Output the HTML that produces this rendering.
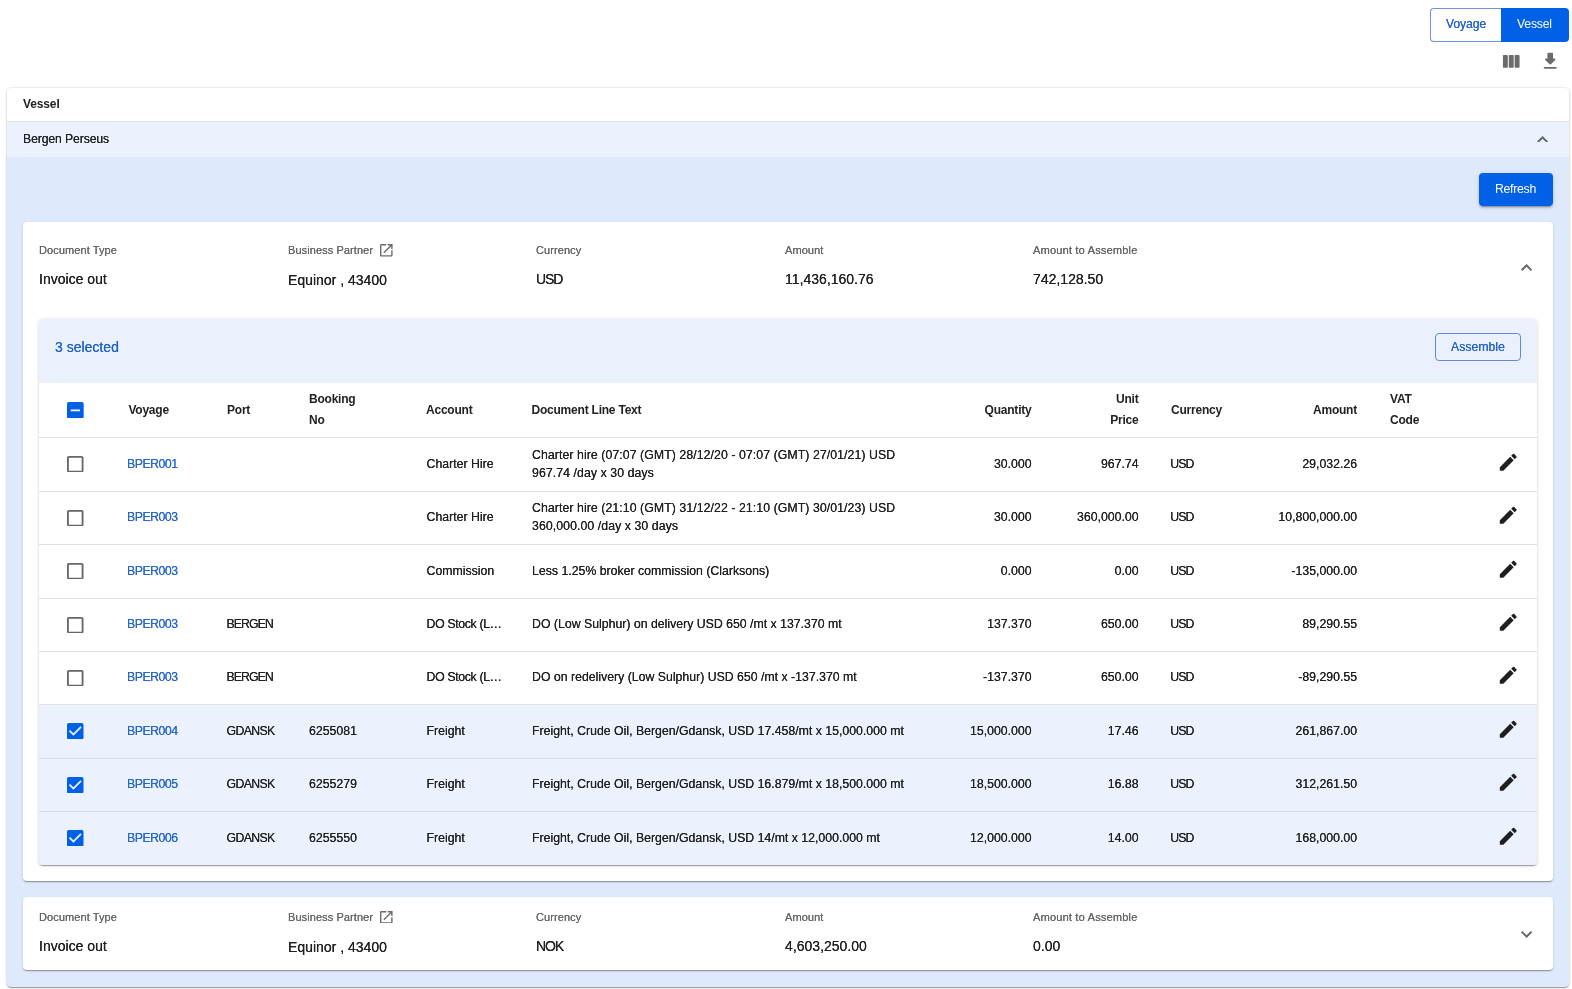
<!DOCTYPE html>
<html><head><meta charset="utf-8"><style>
*{box-sizing:border-box;margin:0;padding:0}
html,body{width:1572px;height:989px;overflow:hidden;background:#fff;font-family:"Liberation Sans",sans-serif;color:#212121}
#root{position:absolute;left:0;top:0;width:1572px;height:989px;will-change:transform;text-shadow:0.1px 0 0 currentColor}
.tg{position:absolute;left:1430px;top:8px;width:139px;height:34px}
.tg .b1{position:absolute;left:0;top:0;width:71px;height:34px;border:1px solid #6f95d6;border-right:none;border-radius:4px 0 0 4px}
.tg .b2{position:absolute;left:71px;top:0;width:68px;height:34px;background:#0061e6;border-radius:0 4px 4px 0}
.tg span{position:absolute;top:10px;font-size:12.2px;line-height:14px;white-space:nowrap}
.ico{position:absolute}
.card{position:absolute;left:7px;top:88px;width:1562px;height:899px;border-radius:4px;background:#dee9fb;box-shadow:0 2px 1px -1px rgba(0,0,0,.2),0 1px 1px 0 rgba(0,0,0,.14),0 1px 3px 0 rgba(0,0,0,.12),0 0 0 0.6px rgba(0,0,0,.07),0 0 5px rgba(0,0,0,.06);overflow:hidden}
.vh{position:absolute;left:0;top:0;width:100%;height:34px;background:#fff;border-bottom:1px solid #e0e0e0}
.vh span{position:absolute;left:16px;top:9.3px;font-size:12px;line-height:14px;color:#222;font-weight:bold;letter-spacing:-0.13px;text-shadow:none}
.bp{position:absolute;left:0;top:34px;width:100%;height:35px;background:#ebf2fd}
.bp span{position:absolute;left:16px;top:10px;font-size:12.2px;line-height:14px;color:#222;letter-spacing:-0.1px}
.chv{position:absolute;width:11.2px;height:6.9px}
.btn{position:absolute;left:1472px;top:85px;width:74px;height:33px;border-radius:4px;background:#0061e6;box-shadow:0 3px 1px -2px rgba(0,0,0,.2),0 2px 2px 0 rgba(0,0,0,.14),0 1px 5px 0 rgba(0,0,0,.12)}
.btn span{position:absolute;left:16px;top:9px;font-size:12.3px;line-height:14px;color:#fff;letter-spacing:-0.3px;text-shadow:none}
.doc{position:absolute;background:#fff;border-radius:4px;box-shadow:0 2px 1px -1px rgba(0,0,0,.2),0 1px 1px 0 rgba(0,0,0,.14),0 1px 3px 0 rgba(0,0,0,.12)}
.lbl{position:absolute;font-size:11px;color:#666;white-space:nowrap;line-height:13px}
.op{position:absolute;left:92px;top:0px;width:12.6px;height:12.6px}
.val{position:absolute;font-size:14px;color:#212121;white-space:nowrap;line-height:16px}
.tbl{position:absolute;left:16px;top:97px;width:1498px;height:546px;background:#fff;border-radius:4px;overflow:hidden;box-shadow:0 2px 1px -1px rgba(0,0,0,.2),0 1px 1px 0 rgba(0,0,0,.14),0 1px 3px 0 rgba(0,0,0,.12),0 0 5px rgba(0,0,0,.06)}
.tb{position:absolute;left:0;top:0;width:100%;height:64px;background:#eaf1fc}
.tb .sc{position:absolute;left:16px;top:20px;font-size:14px;line-height:16px;color:#1f63c6}
.asm{position:absolute;left:1396px;top:14px;width:86px;height:28px;border:1px solid #5f8cd6;border-radius:4px}
.asm span{position:absolute;left:15px;top:6px;font-size:12.2px;line-height:14px;color:#2564c8;letter-spacing:0.05px}
.hdr{position:absolute;left:0;top:64px;width:100%;height:55px;border-bottom:1px solid #e0e0e0;background:#fff}
.row{position:absolute;left:0;width:100%;border-bottom:1px solid #e0e0e0;background:#fff}
.row.last{border-bottom:none}
.row.sel{background:#ebf2fd;border-bottom-color:#d8dee9}
.c{position:absolute;top:0;bottom:0;display:flex;align-items:center;font-size:12.3px;white-space:nowrap;color:#212121;padding-bottom:2px}
.hdr .c,.c.two{padding-bottom:0}
.hdr .c{font-size:12px;font-weight:bold;letter-spacing:-0.22px;text-shadow:none;color:#222}
.c.two{flex-direction:column;align-items:flex-start;justify-content:center;line-height:17.9px;letter-spacing:0.07px}
.ck{position:absolute;left:28px;top:17.5px}
.cb{display:block;width:16.5px;height:16.5px}
.cbh{position:absolute;left:28px;top:18.8px;width:16.7px;height:16.7px}
.vy{left:88px;color:#2868c9}
.hdr .vy{left:89.4px}
.hdr .vy{color:#212121}
.pt{left:187.5px}
.hdr .pt{left:188px}
.bk{left:270px}
.hdr .bk{left:270px}
.ac{left:387.5px}
.hdr .ac{left:387px}
.dt{left:493px}
.hdr .dt{left:492.5px}
.qt{right:505.5px}
.upr{right:398.5px}
.cu{left:1131.2px}
.hdr .cu{left:1132px}
.am{right:180px}
.vat{left:1351px}
.edc{position:absolute;left:1457.8px;top:calc(50% - 13.8px)}
.ed{display:block;width:22.5px;height:22.5px}
.hdr .two2{flex-direction:column;justify-content:center;line-height:21px}
</style></head><body><div id="root">
<div class="tg"><div class="b1"><span style="left:15px;top:8.3px;color:#2564c8;letter-spacing:-0.12px">Voyage</span></div><div class="b2"><span style="left:16px;top:9.3px;color:#fff;letter-spacing:-0.17px;text-shadow:none">Vessel</span></div></div>
<svg class="ico" style="left:1499.3px;top:50.3px;width:23.5px;height:23.5px" viewBox="0 0 24 24"><path fill="#6b6b6b" d="M11 18h3c.55 0 1-.45 1-1V6c0-.55-.45-1-1-1h-3c-.55 0-1 .45-1 1v11c0 .55.45 1 1 1zm-6 0h3c.55 0 1-.45 1-1V6c0-.55-.45-1-1-1H5c-.55 0-1 .45-1 1v11c0 .55.45 1 1 1zM16 6v11c0 .55.45 1 1 1h3c.55 0 1-.45 1-1V6c0-.55-.45-1-1-1h-3c-.55 0-1 .45-1 1z"/></svg>
<svg class="ico" style="left:1539px;top:49.6px;width:22.5px;height:22.5px" viewBox="0 0 24 24"><path fill="#6b6b6b" d="M16.59 9H15V4c0-.55-.45-1-1-1h-4c-.55 0-1 .45-1 1v5H7.41c-.89 0-1.34 1.08-.71 1.71l4.59 4.59c.39.39 1.02.39 1.41 0l4.59-4.59c.63-.63.19-1.710-.7-1.71zM5 19c0 .55.45 1 1 1h12c.55 0 1-.45 1-1s-.45-1-1-1H6c-.55 0-1 .45-1 1z"/></svg>
<div class="card">
 <div class="vh"><span>Vessel</span></div>
 <div class="bp"><span>Bergen Perseus</span><div style="position:absolute;left:1529.7px;top:13.5px"><svg class="chv" viewBox="6 8 12 7.41"><path fill="#5f6368" d="M12 8l-6 6 1.41 1.41L12 10.83l4.59 4.58L18 14z"/></svg></div></div>
 <div class="btn"><span>Refresh</span></div>
 <div class="doc" style="left:16px;top:134px;width:1530px;height:659px">
  <div class="lbl" style="left:16px;top:22px;letter-spacing:0.08px">Document Type</div><div class="val" style="left:16px;top:49px">Invoice out</div><div class="lbl" style="left:265px;top:22px;letter-spacing:0.08px">Business Partner<svg class="op" viewBox="3 3 18 18"><path fill="#6b6b6b" d="M19 19H5V5h7V3H5c-1.11 0-2 .9-2 2v14c0 1.1.89 2 2 2h14c1.1 0 2-.9 2-2v-7h-2v7zM14 3v2h3.59l-9.83 9.83 1.41 1.41L19 6.41V10h2V3h-7z"/></svg></div><div class="val" style="left:265px;top:50px">Equinor , 43400</div><div class="lbl" style="left:513px;top:22px;letter-spacing:0.08px">Currency</div><div class="val" style="left:513px;top:49px"><span style="letter-spacing:-1.1px">USD</span></div><div class="lbl" style="left:762px;top:22px;letter-spacing:0.08px">Amount</div><div class="val" style="left:762px;top:49px">11,436,160.76</div><div class="lbl" style="left:1010px;top:22px;letter-spacing:0.2px">Amount to Assemble</div><div class="val" style="left:1010px;top:49px">742,128.50</div>
  <div style="position:absolute;left:1498px;top:41.8px"><svg class="chv" viewBox="6 8 12 7.41"><path fill="#5f6368" d="M12 8l-6 6 1.41 1.41L12 10.83l4.59 4.58L18 14z"/></svg></div>
  <div class="tbl">
   <div class="tb"><span class="sc">3 selected</span><div class="asm"><span>Assemble</span></div></div>
   <div class="hdr">
    <svg class="cbh" viewBox="3 3 18 18"><path fill="#0061e6" d="M19 3H5c-1.1 0-2 .9-2 2v14c0 1.1.9 2 2 2h14c1.1 0 2-.9 2-2V5c0-1.1-.9-2-2-2zm-2 10H7v-2h10v2z"/></svg>
    <div class="c vy">Voyage</div><div class="c pt">Port</div><div class="c bk two2">Booking<br>No</div><div class="c ac">Account</div>
    <div class="c dt">Document Line Text</div>
    <div class="c qt">Quantity</div><div class="c upr two2" style="align-items:flex-end;text-align:right">Unit<br>Price</div><div class="c cu">Currency</div><div class="c am">Amount</div><div class="c vat two2">VAT<br>Code</div>
   </div>
   <div class="row" style="top:119px;height:54px">
<div class="ck"><svg class="cb" viewBox="3 3 18 18"><path fill="#666" d="M19 5v14H5V5h14m0-2H5c-1.1 0-2 .9-2 2v14c0 1.1.9 2 2 2h14c1.1 0 2-.9 2-2V5c0-1.1-.9-2-2-2z"/></svg></div>
<div class="c vy"><span style="letter-spacing:-0.5px">BPER001</span></div><div class="c pt"></div><div class="c bk"></div><div class="c ac">Charter Hire</div>
<div class="c dt two"><div>Charter hire (07:07 (GMT) 28/12/20 - 07:07 (GMT) 27/01/21) USD</div><div>967.74 /day x 30 days</div></div>
<div class="c qt">30.000</div><div class="c upr">967.74</div><div class="c cu"><span style="letter-spacing:-0.88px">USD</span></div><div class="c am">29,032.26</div>
<div class="edc"><svg class="ed" viewBox="0 0 24 24"><path fill="#1f1f1f" d="M3 17.25V21h3.75L17.81 9.94l-3.75-3.75L3 17.25zM20.71 7.04c.39-.39.39-1.02 0-1.41l-2.34-2.34a.9959.9959 0 0 0-1.41 0l-1.83 1.83 3.75 3.75 1.83-1.83z"/></svg></div>
</div><div class="row" style="top:173px;height:53px">
<div class="ck"><svg class="cb" viewBox="3 3 18 18"><path fill="#666" d="M19 5v14H5V5h14m0-2H5c-1.1 0-2 .9-2 2v14c0 1.1.9 2 2 2h14c1.1 0 2-.9 2-2V5c0-1.1-.9-2-2-2z"/></svg></div>
<div class="c vy"><span style="letter-spacing:-0.5px">BPER003</span></div><div class="c pt"></div><div class="c bk"></div><div class="c ac">Charter Hire</div>
<div class="c dt two"><div>Charter hire (21:10 (GMT) 31/12/22 - 21:10 (GMT) 30/01/23) USD</div><div>360,000.00 /day x 30 days</div></div>
<div class="c qt">30.000</div><div class="c upr">360,000.00</div><div class="c cu"><span style="letter-spacing:-0.88px">USD</span></div><div class="c am">10,800,000.00</div>
<div class="edc"><svg class="ed" viewBox="0 0 24 24"><path fill="#1f1f1f" d="M3 17.25V21h3.75L17.81 9.94l-3.75-3.75L3 17.25zM20.71 7.04c.39-.39.39-1.02 0-1.41l-2.34-2.34a.9959.9959 0 0 0-1.41 0l-1.83 1.83 3.75 3.75 1.83-1.83z"/></svg></div>
</div><div class="row" style="top:226px;height:54px">
<div class="ck"><svg class="cb" viewBox="3 3 18 18"><path fill="#666" d="M19 5v14H5V5h14m0-2H5c-1.1 0-2 .9-2 2v14c0 1.1.9 2 2 2h14c1.1 0 2-.9 2-2V5c0-1.1-.9-2-2-2z"/></svg></div>
<div class="c vy"><span style="letter-spacing:-0.5px">BPER003</span></div><div class="c pt"></div><div class="c bk"></div><div class="c ac">Commission</div>
<div class="c dt">Less 1.25% broker commission (Clarksons)</div>
<div class="c qt">0.000</div><div class="c upr">0.00</div><div class="c cu"><span style="letter-spacing:-0.88px">USD</span></div><div class="c am">-135,000.00</div>
<div class="edc"><svg class="ed" viewBox="0 0 24 24"><path fill="#1f1f1f" d="M3 17.25V21h3.75L17.81 9.94l-3.75-3.75L3 17.25zM20.71 7.04c.39-.39.39-1.02 0-1.41l-2.34-2.34a.9959.9959 0 0 0-1.41 0l-1.83 1.83 3.75 3.75 1.83-1.83z"/></svg></div>
</div><div class="row" style="top:280px;height:53px">
<div class="ck"><svg class="cb" viewBox="3 3 18 18"><path fill="#666" d="M19 5v14H5V5h14m0-2H5c-1.1 0-2 .9-2 2v14c0 1.1.9 2 2 2h14c1.1 0 2-.9 2-2V5c0-1.1-.9-2-2-2z"/></svg></div>
<div class="c vy"><span style="letter-spacing:-0.5px">BPER003</span></div><div class="c pt"><span style="letter-spacing:-0.95px">BERGEN</span></div><div class="c bk"></div><div class="c ac"><span style="letter-spacing:-0.35px">DO Stock (L…</span></div>
<div class="c dt">DO (Low Sulphur) on delivery USD 650 /mt x 137.370 mt</div>
<div class="c qt">137.370</div><div class="c upr">650.00</div><div class="c cu"><span style="letter-spacing:-0.88px">USD</span></div><div class="c am">89,290.55</div>
<div class="edc"><svg class="ed" viewBox="0 0 24 24"><path fill="#1f1f1f" d="M3 17.25V21h3.75L17.81 9.94l-3.75-3.75L3 17.25zM20.71 7.04c.39-.39.39-1.02 0-1.41l-2.34-2.34a.9959.9959 0 0 0-1.41 0l-1.83 1.83 3.75 3.75 1.83-1.83z"/></svg></div>
</div><div class="row" style="top:333px;height:53px">
<div class="ck"><svg class="cb" viewBox="3 3 18 18"><path fill="#666" d="M19 5v14H5V5h14m0-2H5c-1.1 0-2 .9-2 2v14c0 1.1.9 2 2 2h14c1.1 0 2-.9 2-2V5c0-1.1-.9-2-2-2z"/></svg></div>
<div class="c vy"><span style="letter-spacing:-0.5px">BPER003</span></div><div class="c pt"><span style="letter-spacing:-0.95px">BERGEN</span></div><div class="c bk"></div><div class="c ac"><span style="letter-spacing:-0.35px">DO Stock (L…</span></div>
<div class="c dt">DO on redelivery (Low Sulphur) USD 650 /mt x -137.370 mt</div>
<div class="c qt">-137.370</div><div class="c upr">650.00</div><div class="c cu"><span style="letter-spacing:-0.88px">USD</span></div><div class="c am">-89,290.55</div>
<div class="edc"><svg class="ed" viewBox="0 0 24 24"><path fill="#1f1f1f" d="M3 17.25V21h3.75L17.81 9.94l-3.75-3.75L3 17.25zM20.71 7.04c.39-.39.39-1.02 0-1.41l-2.34-2.34a.9959.9959 0 0 0-1.41 0l-1.83 1.83 3.75 3.75 1.83-1.83z"/></svg></div>
</div><div class="row sel" style="top:386px;height:54px">
<div class="ck"><svg class="cb" viewBox="3 3 18 18"><path fill="#0061e6" d="M19 3H5c-1.11 0-2 .9-2 2v14c0 1.1.89 2 2 2h14c1.11 0 2-.9 2-2V5c0-1.1-.89-2-2-2zm-9 14l-5-5 1.41-1.41L10 14.17l7.59-7.59L19 8l-9 9z"/></svg></div>
<div class="c vy"><span style="letter-spacing:-0.5px">BPER004</span></div><div class="c pt"><span style="letter-spacing:-0.65px">GDANSK</span></div><div class="c bk">6255081</div><div class="c ac">Freight</div>
<div class="c dt">Freight, Crude Oil, Bergen/Gdansk, USD 17.458/mt x 15,000.000 mt</div>
<div class="c qt">15,000.000</div><div class="c upr">17.46</div><div class="c cu"><span style="letter-spacing:-0.88px">USD</span></div><div class="c am">261,867.00</div>
<div class="edc"><svg class="ed" viewBox="0 0 24 24"><path fill="#1f1f1f" d="M3 17.25V21h3.75L17.81 9.94l-3.75-3.75L3 17.25zM20.71 7.04c.39-.39.39-1.02 0-1.41l-2.34-2.34a.9959.9959 0 0 0-1.41 0l-1.83 1.83 3.75 3.75 1.83-1.83z"/></svg></div>
</div><div class="row sel" style="top:440px;height:53px">
<div class="ck"><svg class="cb" viewBox="3 3 18 18"><path fill="#0061e6" d="M19 3H5c-1.11 0-2 .9-2 2v14c0 1.1.89 2 2 2h14c1.11 0 2-.9 2-2V5c0-1.1-.89-2-2-2zm-9 14l-5-5 1.41-1.41L10 14.17l7.59-7.59L19 8l-9 9z"/></svg></div>
<div class="c vy"><span style="letter-spacing:-0.5px">BPER005</span></div><div class="c pt"><span style="letter-spacing:-0.65px">GDANSK</span></div><div class="c bk">6255279</div><div class="c ac">Freight</div>
<div class="c dt">Freight, Crude Oil, Bergen/Gdansk, USD 16.879/mt x 18,500.000 mt</div>
<div class="c qt">18,500.000</div><div class="c upr">16.88</div><div class="c cu"><span style="letter-spacing:-0.88px">USD</span></div><div class="c am">312,261.50</div>
<div class="edc"><svg class="ed" viewBox="0 0 24 24"><path fill="#1f1f1f" d="M3 17.25V21h3.75L17.81 9.94l-3.75-3.75L3 17.25zM20.71 7.04c.39-.39.39-1.02 0-1.41l-2.34-2.34a.9959.9959 0 0 0-1.41 0l-1.83 1.83 3.75 3.75 1.83-1.83z"/></svg></div>
</div><div class="row sel last" style="top:493px;height:53px">
<div class="ck"><svg class="cb" viewBox="3 3 18 18"><path fill="#0061e6" d="M19 3H5c-1.11 0-2 .9-2 2v14c0 1.1.89 2 2 2h14c1.11 0 2-.9 2-2V5c0-1.1-.89-2-2-2zm-9 14l-5-5 1.41-1.41L10 14.17l7.59-7.59L19 8l-9 9z"/></svg></div>
<div class="c vy"><span style="letter-spacing:-0.5px">BPER006</span></div><div class="c pt"><span style="letter-spacing:-0.65px">GDANSK</span></div><div class="c bk">6255550</div><div class="c ac">Freight</div>
<div class="c dt">Freight, Crude Oil, Bergen/Gdansk, USD 14/mt x 12,000.000 mt</div>
<div class="c qt">12,000.000</div><div class="c upr">14.00</div><div class="c cu"><span style="letter-spacing:-0.88px">USD</span></div><div class="c am">168,000.00</div>
<div class="edc"><svg class="ed" viewBox="0 0 24 24"><path fill="#1f1f1f" d="M3 17.25V21h3.75L17.81 9.94l-3.75-3.75L3 17.25zM20.71 7.04c.39-.39.39-1.02 0-1.41l-2.34-2.34a.9959.9959 0 0 0-1.41 0l-1.83 1.83 3.75 3.75 1.83-1.83z"/></svg></div>
</div>
  </div>
 </div>
 <div class="doc" style="left:16px;top:809px;width:1530px;height:73px">
  <div class="lbl" style="left:16px;top:13.5px;letter-spacing:0.08px">Document Type</div><div class="val" style="left:16px;top:40.5px">Invoice out</div><div class="lbl" style="left:265px;top:13.5px;letter-spacing:0.08px">Business Partner<svg class="op" viewBox="3 3 18 18"><path fill="#6b6b6b" d="M19 19H5V5h7V3H5c-1.11 0-2 .9-2 2v14c0 1.1.89 2 2 2h14c1.1 0 2-.9 2-2v-7h-2v7zM14 3v2h3.59l-9.83 9.83 1.41 1.41L19 6.41V10h2V3h-7z"/></svg></div><div class="val" style="left:265px;top:41.5px">Equinor , 43400</div><div class="lbl" style="left:513px;top:13.5px;letter-spacing:0.08px">Currency</div><div class="val" style="left:513px;top:40.5px"><span style="letter-spacing:-1.1px">NOK</span></div><div class="lbl" style="left:762px;top:13.5px;letter-spacing:0.08px">Amount</div><div class="val" style="left:762px;top:40.5px">4,603,250.00</div><div class="lbl" style="left:1010px;top:13.5px;letter-spacing:0.2px">Amount to Assemble</div><div class="val" style="left:1010px;top:40.5px">0.00</div>
  <div style="position:absolute;left:1498px;top:34px"><svg class="chv" viewBox="6 8.59 12 7.41"><path fill="#5f6368" d="M16.59 8.59L12 13.17 7.41 8.59 6 10l6 6 6-6z"/></svg></div>
 </div>
</div>
</div></body></html>
